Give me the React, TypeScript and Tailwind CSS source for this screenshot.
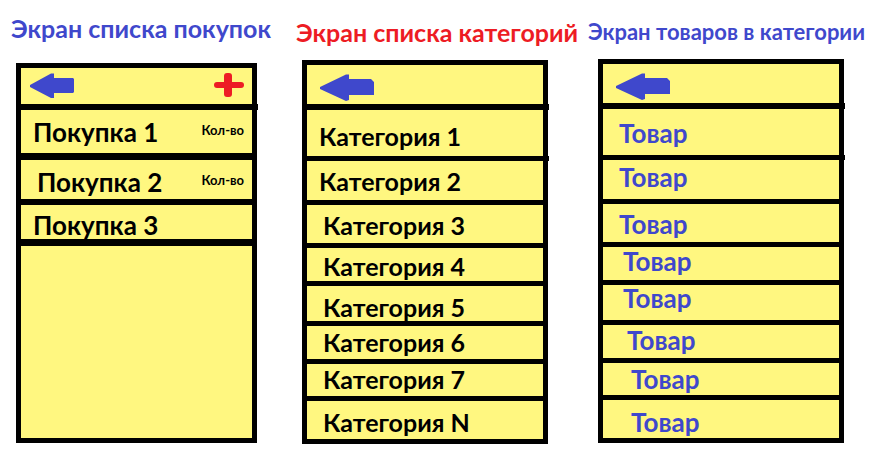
import type { ReactNode } from "react";

type Row = { label: string; amount?: string; className: string };

const purchases: Row[] = [
  { label: "Покупка 1", amount: "Кол-во", className: "min-h-[50px] border-b-[7px] pl-3" },
  { label: "Покупка 2", amount: "Кол-во", className: "min-h-[45px] border-b-[6px] pl-4 pt-1" },
  { label: "Покупка 3", className: "min-h-[41px] border-b-[7px] pl-3 pt-1.5" },
];

const categories: Row[] = [
  { label: "Категория 1", className: "-mr-[6px] min-h-[51px] border-b-[5px] pl-3 pt-1.5" },
  { label: "Категория 2", className: "min-h-[44px] border-b-[5px] pl-3" },
  { label: "Категория 3", className: "min-h-[43px] border-b-[5px] pl-4 pt-0.5" },
  { label: "Категория 4", className: "min-h-[38px] border-b-[5px] pl-4 pt-0.5" },
  { label: "Категория 5", className: "min-h-[40px] border-b-[5px] pl-4 pt-1.5" },
  { label: "Категория 6", className: "min-h-[38px] border-b-[5px] pl-4 pb-0.5" },
  { label: "Категория 7", className: "min-h-[37px] border-b-[5px] pl-4 pb-0.5" },
  { label: "Категория N", className: "min-h-[38px] pl-4 pt-1" },
];

const products: Row[] = [
  { label: "Товар", className: "-mr-[6px] min-h-[51px] border-b-[5px] pl-4 pt-0.5" },
  { label: "Товар", className: "min-h-[44px] border-b-[5px] pl-4 pb-1.5" },
  { label: "Товар", className: "min-h-[43px] border-b-[5px] pl-4 pt-0.5" },
  { label: "Товар", className: "min-h-[38px] border-b-[5px] pl-5 pb-1.5" },
  { label: "Товар", className: "min-h-[40px] border-b-[5px] pl-5 pb-2.5" },
  { label: "Товар", className: "min-h-[38px] border-b-[5px] pl-6 pb-1" },
  { label: "Товар", className: "min-h-[37px] border-b-[5px] pl-7" },
  { label: "Товар", className: "min-h-[38px] pl-7 pt-1.5" },
];

function BackButton({ wide = false }: { wide?: boolean }) {
  return (
    <button type="button" aria-label="Назад" className="block text-[#3f48cc]">
      {wide ? (
        <svg width="54" height="27" viewBox="0 0 54 27" fill="currentColor">
          <path d="M0 13 L26 0.5 H29 V5 H51 L54 8 V21 H29 V26 L26 27 L0 15 Z" />
        </svg>
      ) : (
        <svg width="44" height="25" viewBox="0 0 44 25" fill="currentColor">
          <path d="M0 12 L21 0.5 H24 V5 H43 L44 6 V19 L43 20 H24 V25 H21 L0 14 Z" />
        </svg>
      )}
    </button>
  );
}

function AddButton() {
  return (
    <button type="button" aria-label="Добавить" className="block text-[#ed1c24]">
      <svg width="30" height="24" viewBox="0 0 30 24" fill="currentColor">
        <rect x="0" y="9" width="30" height="6" rx="3" />
        <rect x="10" y="0" width="8" height="24" rx="3" />
      </svg>
    </button>
  );
}

function Panel({
  header,
  rows,
  className,
  headerClassName,
}: {
  header: ReactNode;
  rows: Row[];
  className: string;
  headerClassName: string;
}) {
  return (
    <div className={`flex flex-col border-[5px] border-black bg-[#fff780] leading-[22px] ${className}`}>
      <div
        className={`-mr-[6px] flex items-center justify-between border-b-[6px] border-black pr-[14px] ${headerClassName}`}
      >
        {header}
      </div>
      <ul>
        {rows.map((row, i) => (
          <li
            key={i}
            className={`flex items-center justify-between border-black pr-2 ${row.className}`}
          >
            <span>{row.label}</span>
            {row.amount && <span className="pb-1 text-[13px] leading-[16px]">{row.amount}</span>}
          </li>
        ))}
      </ul>
    </div>
  );
}

export default function App() {
  return (
    <main className="grid grid-cols-[285fr_292fr_301fr] bg-white pb-4 pl-[11px] font-['Comic_Sans_MS','Lato','Open_Sans',sans-serif] font-bold whitespace-nowrap text-black">
      <section className="flex min-w-0 flex-col">
        <h1 className="pt-3 text-[25px] leading-[32px] text-[#3f48cc]">Экран списка покупок</h1>
        <Panel
          className="mt-[19px] mr-[39px] ml-[5px] min-h-[380px] text-[26px]"
          headerClassName="min-h-[42px] pb-0.5 pl-[9px]"
          rows={purchases}
          header={
            <>
              <BackButton />
              <AddButton />
            </>
          }
        />
      </section>
      <section className="flex min-w-0 flex-col">
        <h1 className="pt-4 text-[25px] leading-[32px] text-[#ed1c24]">Экран списка категорий</h1>
        <Panel
          className="mt-3 mr-[40px] ml-[6px] text-[25px]"
          headerClassName="min-h-[45px] pt-1.5 pl-[13px]"
          rows={categories}
          header={<BackButton wide />}
        />
      </section>
      <section className="flex min-w-0 flex-col">
        <h1 className="pt-4 text-[22px] leading-[32px] text-[#3f48cc]">Экран товаров в категории</h1>
        <Panel
          className="mt-[11px] mr-[45px] ml-[10px] text-[26px] text-[#3f48cc]"
          headerClassName="min-h-[45px] pt-1.5 pl-[13px]"
          rows={products}
          header={<BackButton wide />}
        />
      </section>
    </main>
  );
}
